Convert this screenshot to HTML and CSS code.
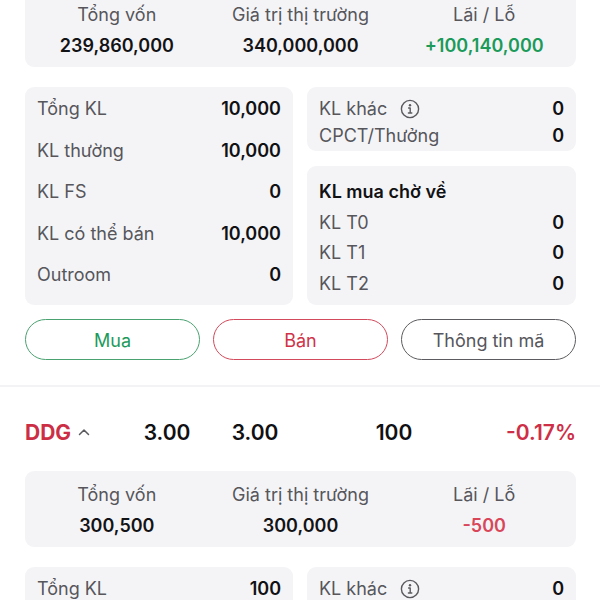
FILE: index.html
```html
<!DOCTYPE html>
<html lang="vi">
<head>
<meta charset="utf-8">
<title>Danh mục</title>
<link rel="stylesheet" href="styles.css">
</head>
<body>
<div class="page">
  <section class="holding holding-first">
    <div class="summary">
      <div class="sum-col"><div class="sum-label">Tổng vốn</div><div class="sum-value">239,860,000</div></div>
      <div class="sum-col"><div class="sum-label">Giá trị thị trường</div><div class="sum-value">340,000,000</div></div>
      <div class="sum-col"><div class="sum-label">Lãi / Lỗ</div><div class="sum-value up">+100,140,000</div></div>
    </div>
    <div class="details">
      <div class="panel panel-main">
        <div class="row"><span class="lbl">Tổng KL</span><span class="val">10,000</span></div>
        <div class="row"><span class="lbl">KL thường</span><span class="val">10,000</span></div>
        <div class="row"><span class="lbl">KL FS</span><span class="val">0</span></div>
        <div class="row"><span class="lbl">KL có thể bán</span><span class="val">10,000</span></div>
        <div class="row"><span class="lbl">Outroom</span><span class="val">0</span></div>
      </div>
      <div class="side">
        <div class="panel panel-other">
          <div class="row"><span class="lbl">KL khác <svg class="info" width="20" height="20" viewBox="0 0 20 20"><circle cx="10" cy="10" r="8.6" fill="none" stroke="#5a5a5e" stroke-width="1.4"/><circle cx="10" cy="6.2" r="1.2" fill="#5a5a5e"/><path d="M8.6 9h1.6v5M8.4 14h3.4" fill="none" stroke="#5a5a5e" stroke-width="1.4" stroke-linecap="round" stroke-linejoin="round"/></svg></span><span class="val">0</span></div>
          <div class="row"><span class="lbl">CPCT/Thưởng</span><span class="val">0</span></div>
        </div>
        <div class="panel panel-pending">
          <div class="pending-title">KL mua chờ về</div>
          <div class="row"><span class="lbl">KL T0</span><span class="val">0</span></div>
          <div class="row"><span class="lbl">KL T1</span><span class="val">0</span></div>
          <div class="row"><span class="lbl">KL T2</span><span class="val">0</span></div>
        </div>
      </div>
    </div>
    <div class="actions">
      <button class="btn btn-buy">Mua</button>
      <button class="btn btn-sell">Bán</button>
      <button class="btn btn-info">Thông tin mã</button>
    </div>
  </section>

  <section class="holding holding-next">
    <div class="stock-row">
      <div class="sym">DDG <svg class="caret" width="12" height="8" viewBox="0 0 12 8"><path d="M1.5 6.5L6 2l4.5 4.5" fill="none" stroke="#5a5a5e" stroke-width="1.5" stroke-linecap="round" stroke-linejoin="round"/></svg></div>
      <div class="num">3.00</div>
      <div class="num">3.00</div>
      <div class="num">100</div>
      <div class="num pct">-0.17%</div>
    </div>
    <div class="summary">
      <div class="sum-col"><div class="sum-label">Tổng vốn</div><div class="sum-value">300,500</div></div>
      <div class="sum-col"><div class="sum-label">Giá trị thị trường</div><div class="sum-value">300,000</div></div>
      <div class="sum-col"><div class="sum-label">Lãi / Lỗ</div><div class="sum-value down-soft">-500</div></div>
    </div>
    <div class="details">
      <div class="panel panel-main">
        <div class="row"><span class="lbl">Tổng KL</span><span class="val">100</span></div>
        <div class="row"><span class="lbl">KL thường</span><span class="val">100</span></div>
        <div class="row"><span class="lbl">KL FS</span><span class="val">0</span></div>
        <div class="row"><span class="lbl">KL có thể bán</span><span class="val">100</span></div>
        <div class="row"><span class="lbl">Outroom</span><span class="val">0</span></div>
      </div>
      <div class="side">
        <div class="panel panel-other">
          <div class="row"><span class="lbl">KL khác <svg class="info" width="20" height="20" viewBox="0 0 20 20"><circle cx="10" cy="10" r="8.6" fill="none" stroke="#5a5a5e" stroke-width="1.4"/><circle cx="10" cy="6.2" r="1.2" fill="#5a5a5e"/><path d="M8.6 9h1.6v5M8.4 14h3.4" fill="none" stroke="#5a5a5e" stroke-width="1.4" stroke-linecap="round" stroke-linejoin="round"/></svg></span><span class="val">0</span></div>
          <div class="row"><span class="lbl">CPCT/Thưởng</span><span class="val">0</span></div>
        </div>
        <div class="panel panel-pending">
          <div class="pending-title">KL mua chờ về</div>
          <div class="row"><span class="lbl">KL T0</span><span class="val">0</span></div>
          <div class="row"><span class="lbl">KL T1</span><span class="val">0</span></div>
          <div class="row"><span class="lbl">KL T2</span><span class="val">0</span></div>
        </div>
      </div>
    </div>
  </section>
</div>
</body>
</html>
```

FILE: styles.css
```css
html, body {
  margin: 0;
  padding: 0;
  background: #ffffff;
}
body {
  height: 600px;
  overflow: hidden;
  font-family: Inter, "Noto Sans", "Liberation Sans", sans-serif;
  color: #111114;
  -webkit-font-smoothing: antialiased;
}
.page {
  display: flex;
  flex-direction: column;
}
.holding {
  display: flex;
  flex-direction: column;
  padding: 0 24px 0 25px;
}
.holding-first {
  padding-bottom: 25px;
  border-bottom: 2px solid #f3f3f5;
}
.holding-first .summary {
  margin-top: -9px;
}
.holding-next {
  padding-top: 33px;
}

/* summary card */
.summary {
  display: grid;
  grid-template-columns: 1fr 1fr 1fr;
  background: #f4f4f7;
  border-radius: 9px;
  padding: 13px 0 10px;
}
.sum-col {
  display: flex;
  flex-direction: column;
  align-items: center;
  gap: 9px;
}
.sum-label {
  font-size: 18px;
  line-height: 22px;
  color: #56565b;
}
.sum-value {
  font-size: 18px;
  line-height: 22px;
  font-weight: 600;
  color: #131316;
}
.up { color: #1b9a5a; }
.down-soft { color: #d9465a; }

/* details */
.details {
  display: grid;
  grid-template-columns: 268px 1fr;
  column-gap: 14px;
  margin-top: 20px;
}
.side {
  display: flex;
  flex-direction: column;
  gap: 15px;
}
.panel {
  background: #f4f4f7;
  border-radius: 9px;
  display: flex;
  flex-direction: column;
  padding: 0 12px;
}
.panel-main {
  padding-top: 11px;
  padding-bottom: 19px;
  gap: 19.5px;
}
.panel-other {
  padding-top: 11px;
  padding-bottom: 4px;
  gap: 5px;
}
.panel-pending {
  padding-top: 15px;
  padding-bottom: 10px;
  gap: 8.7px;
}
.row {
  display: flex;
  justify-content: space-between;
  align-items: center;
  height: 22px;
  font-size: 18px;
  line-height: 22px;
}
.lbl {
  color: #56565b;
  display: flex;
  align-items: center;
}
.val {
  font-weight: 600;
  color: #111114;
}
.info {
  margin-left: 13px;
}
.pending-title {
  font-size: 18px;
  line-height: 22px;
  font-weight: 600;
  color: #111114;
}

/* actions */
.actions {
  display: grid;
  grid-template-columns: 1fr 1fr 1fr;
  column-gap: 13px;
  margin-top: 14px;
}
.btn {
  height: 41px;
  border-radius: 21px;
  background: #ffffff;
  font-family: inherit;
  font-size: 18px;
  padding: 2px 0 0;
  display: flex;
  align-items: center;
  justify-content: center;
}
.btn-buy {
  border: 1.5px solid #4aa271;
  color: #1d9a5b;
}
.btn-sell {
  border: 1.5px solid #d24a5b;
  color: #cf3347;
}
.btn-info {
  border: 1.5px solid #5c5c60;
  color: #56565b;
}

/* stock row */
.stock-row {
  display: grid;
  grid-template-columns: 98px 88px 88px 190px 1fr;
  align-items: center;
  height: 26px;
  margin-bottom: 25px;
  font-size: 21px;
  line-height: 26px;
  font-weight: 600;
}
.sym {
  color: #cc2e45;
  font-weight: 700;
  display: flex;
  align-items: center;
}
.caret {
  margin-left: 7px;
  margin-top: -3px;
}
.num {
  text-align: center;
  color: #111114;
}
.num.pct {
  text-align: right;
  color: #cf2f46;
}
```
